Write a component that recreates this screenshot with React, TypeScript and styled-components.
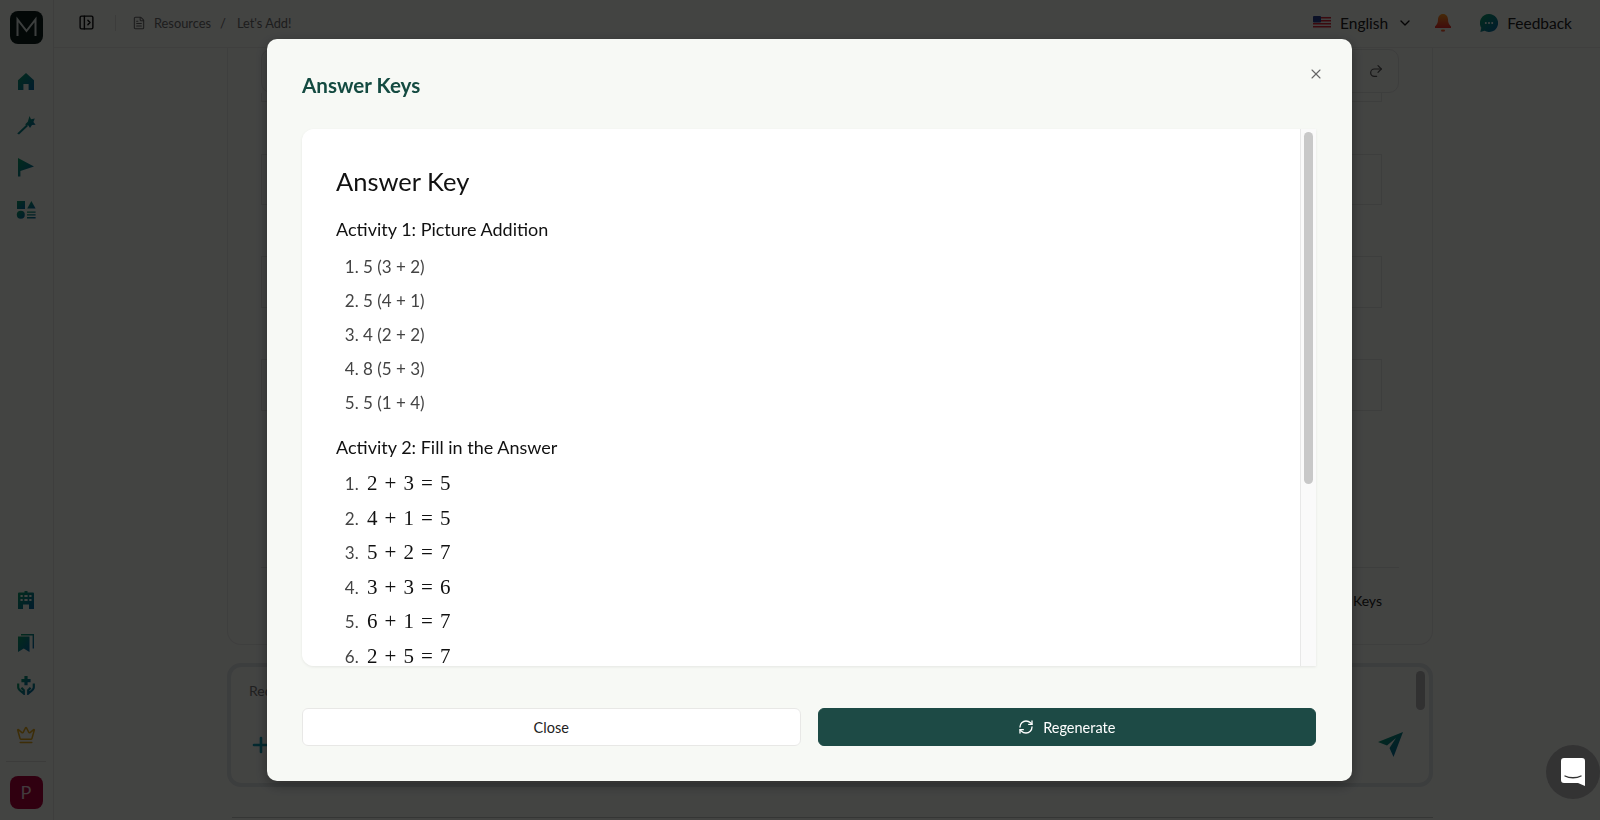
import { createGlobalStyle, styled } from "styled-components";
import { ChevronDown, Crown, FileText, PanelLeftOpen, Plus, RefreshCw, Redo2, X } from "lucide-react";

const GlobalStyle = createGlobalStyle`
  html, body {
    margin: 0;
    height: 820px;
    overflow: hidden;
    background: #f7f9f5;
    font-family: "Lato", "Liberation Sans", sans-serif;
  }
  * { box-sizing: border-box; }
`;

const firstAnswers = ["5 (3 + 2)", "5 (4 + 1)", "4 (2 + 2)", "8 (5 + 3)", "5 (1 + 4)"];
const secondAnswers = ["2 + 3 = 5", "4 + 1 = 5", "5 + 2 = 7", "3 + 3 = 6", "6 + 1 = 7", "2 + 5 = 7"];
const stubs = [
  { height: 9, gap: 52 },
  { height: 51, gap: 51 },
  { height: 52, gap: 51 },
  { height: 52, gap: 0 },
];

const Gradients = () => (
  <svg width="0" height="0" style={{ position: "absolute" }}>
    <defs>
      <linearGradient id="brand" x1="0" y1="0" x2="1" y2="1">
        <stop offset="0" stopColor="#0a9f66" />
        <stop offset="1" stopColor="#0666a8" />
      </linearGradient>
      <linearGradient id="alert" x1="0" y1="0" x2="0" y2="1">
        <stop offset="0" stopColor="#ff9a1f" />
        <stop offset="1" stopColor="#ee2b2b" />
      </linearGradient>
    </defs>
  </svg>
);

const LogoMark = () => (
  <svg width="33" height="33" viewBox="0 0 33 33" fill="none" stroke="#dfe8e5" strokeWidth="2">
    <path d="M7.500 25V8.500L16.500 20 25.500 8.500V25" />
  </svg>
);
const HomeIcon = () => (
  <svg width="20" height="20" viewBox="0 0 20 20" fill="url(#brand)">
    <path d="M10 1 18 8.200 18 18 12.600 18 12.600 12 7.400 12 7.400 18 2 18 2 8.200Z" />
  </svg>
);
const WandIcon = () => (
  <svg width="20" height="20" viewBox="0 0 20 20" fill="url(#brand)">
    <path d="M13.500 1 15 4.300 18.800 3.400 17.400 7 19.600 9.800 16 10 14 13 12.400 10.400 9 9.400 11.800 6.800Z" />
    <path d="M10.600 9.600 12 11 3 19.600 1.200 18.400Z" />
  </svg>
);
const FlagIcon = () => (
  <svg width="18" height="20" viewBox="0 0 18 20" fill="url(#brand)">
    <path d="M1 1 17 9.600 3.400 14 3.400 19.600 1 19.600Z" />
  </svg>
);
const ShapesIcon = () => (
  <svg width="20" height="20" viewBox="0 0 20 20" fill="url(#brand)">
    <rect x="1" y="1" width="8" height="8" />
    <path d="M15.400 1 19.600 8.600 11.200 8.600Z" />
    <circle cx="4.800" cy="14.800" r="4" />
    <path d="M11 11.400h8.600v1.400H11zM11 14.200h8.600v1.400H11zM11 17h8.600v1.400H11z" />
  </svg>
);
const BuildingIcon = () => (
  <svg width="16" height="18" viewBox="0 0 16 18" fill="url(#brand)">
    <path
      fillRule="evenodd"
      d="M6.500 0h3v1.500H15a1 1 0 0 1 1 1V18h-5v-4.500H5V18H0V2.500a1 1 0 0 1 1-1h5.500ZM2.500 4v2h2.200V4Zm3.900 0v2h3.200V4Zm4.900 0v2h2.200V4ZM2.500 8v2h2.200V8Zm3.900 0v2h3.200V8Zm4.900 0v2h2.200V8Z"
    />
  </svg>
);
const BookmarksIcon = () => (
  <svg width="16" height="18" viewBox="0 0 16 18" fill="url(#brand)">
    <path d="M0 2.500h11.500V18L5.750 14.400 0 18Z" />
    <path d="M3 0h13v14.500h-1.400V1.400H3Z" />
  </svg>
);
const CareIcon = () => (
  <svg width="20" height="20" viewBox="0 0 20 20">
    <path fill="url(#brand)" d="M8.400 1h3.200v3h3v3.200h-3v3H8.400v-3h-3V4h3Z" />
    <path
      fill="none"
      stroke="url(#brand)"
      strokeWidth="2.200"
      d="M2.200 8.500v3.800c0 2.400 2.200 3.700 5.600 6.200v-3.200l-2.400-2.600M17.800 8.500v3.800c0 2.400-2.200 3.700-5.600 6.200v-3.200l2.400-2.600"
    />
  </svg>
);
const SendIcon = () => (
  <svg width="25" height="25" viewBox="0 0 25 25" fill="url(#brand)">
    <path d="M25 0 0 10 9 13.500 18 6 11.500 16 15.500 25Z" />
  </svg>
);
const BellIcon = () => (
  <svg width="16" height="18" viewBox="0 0 16 18" fill="url(#alert)">
    <path d="M8 0c3.200 0 5 2.600 5 5.600 0 3.200 1 5.200 3 6.800v1.600H0v-1.600c2-1.600 3-3.600 3-6.800C3 2.600 4.800 0 8 0Z" />
    <rect x="6" y="15.400" width="4" height="2" rx="1" />
  </svg>
);
const BubbleIcon = () => (
  <svg width="18" height="18" viewBox="0 0 18 18">
    <path fill="url(#brand)" d="M9 0a9 9 0 1 1-4.400 16.800L.4 18l.9-4.300A9 9 0 0 1 9 0Z" />
    <circle cx="5.800" cy="9" r="1" fill="#fff" />
    <circle cx="9" cy="9" r="1" fill="#fff" />
    <circle cx="12.200" cy="9" r="1" fill="#fff" />
  </svg>
);
const UsFlag = () => (
  <svg width="18" height="13" viewBox="0 0 18 13">
    <rect width="18" height="13" rx="1" fill="#f0f0f0" />
    <path d="M0 1h18v1.400H0zM0 4h18v1.400H0zM0 7h18v1.400H0zM0 10h18v1.400H0z" fill="#d8283a" />
    <rect width="8" height="6.500" rx="1" fill="#2a3f8f" />
  </svg>
);
const ChatIcon = () => (
  <svg width="24" height="28" viewBox="0 0 24 28">
    <path d="M3 0h18a3 3 0 0 1 3 3v25l-7-3H3a3 3 0 0 1-3-3V3a3 3 0 0 1 3-3Z" fill="#fff" />
    <path d="M4 18c4.500 2.400 11.500 2.400 16 0" fill="none" stroke="#333" strokeWidth="1.400" strokeLinecap="round" />
  </svg>
);

export default function App() {
  return (
    <>
      <GlobalStyle />
      <Gradients />
      <Page>
        <Sidebar>
          <Logo><LogoMark /></Logo>
          <NavGroup>
            <NavItem><HomeIcon /></NavItem>
            <NavItem><WandIcon /></NavItem>
            <NavItem><FlagIcon /></NavItem>
            <NavItem><ShapesIcon /></NavItem>
          </NavGroup>
          <Spacer />
          <NavGroup>
            <NavItem><BuildingIcon /></NavItem>
            <NavItem><BookmarksIcon /></NavItem>
            <NavItem><CareIcon /></NavItem>
            <CrownItem><Crown size={20} color="#e0a81c" strokeWidth={1.8} /></CrownItem>
          </NavGroup>
          <SideDivider />
          <Avatar>P</Avatar>
        </Sidebar>
        <Main>
          <Header>
            <PanelLeftOpen size={17} color="#111" strokeWidth={2} />
            <HeaderDivider />
            <FileText size={14} color="#666" strokeWidth={1.8} />
            <Crumb>Resources</Crumb>
            <CrumbSlash>/</CrumbSlash>
            <Crumb>Let's Add!</Crumb>
            <Spacer />
            <UsFlag />
            <Language>English</Language>
            <ChevronDown size={16} color="#111" strokeWidth={2} />
            <BellSlot><BellIcon /></BellSlot>
            <BubbleIcon />
            <Language>Feedback</Language>
          </Header>
          <Content>
            <Card>
              <Toolbar>
                <RedoButton><Redo2 size={16} color="#555" strokeWidth={1.8} /></RedoButton>
              </Toolbar>
              <StubList>
                {stubs.map((stub, i) => (
                  <Stub key={i} $height={stub.height} $gap={stub.gap} />
                ))}
              </StubList>
              <Spacer />
              <CardFooter>
                <span>Answer Keys</span>
              </CardFooter>
            </Card>
            <Composer>
              <ComposerText>Request changes</ComposerText>
              <ComposerRow>
                <Plus size={24} color="#0f9ab0" strokeWidth={2.6} />
                <SendIcon />
              </ComposerRow>
              <ComposerThumb />
            </Composer>
            <NextEdge />
          </Content>
        </Main>
      </Page>
      <Overlay>
        <Modal>
          <ModalHeader>
            <ModalTitle>Answer Keys</ModalTitle>
            <CloseIcon><X size={16} color="#666" strokeWidth={1.6} /></CloseIcon>
          </ModalHeader>
          <Panel>
            <Doc>
              <DocTitle>Answer Key</DocTitle>
              <DocHeading>Activity 1: Picture Addition</DocHeading>
              <AnswerList>
                {firstAnswers.map((a) => (
                  <Answer key={a}>{a}</Answer>
                ))}
              </AnswerList>
              <DocHeading>Activity 2: Fill in the Answer</DocHeading>
              <MathList>
                {secondAnswers.map((a) => (
                  <MathAnswer key={a}><MathText>{a}</MathText></MathAnswer>
                ))}
              </MathList>
            </Doc>
            <ScrollRail>
              <ScrollThumb />
            </ScrollRail>
          </Panel>
          <ModalFooter>
            <FooterButton>Close</FooterButton>
            <FooterButton $primary>
              <RefreshCw size={16} strokeWidth={2} />
              Regenerate
            </FooterButton>
          </ModalFooter>
        </Modal>
      </Overlay>
      <ChatBubble><ChatIcon /></ChatBubble>
    </>
  );
}

const Page = styled.div`
  display: grid;
  grid-template-columns: 54px 1fr;
  height: 820px;
`;

const Sidebar = styled.aside`
  display: flex;
  flex-direction: column;
  align-items: center;
  padding: 11px 1px 11px 0;
  border-right: 1px solid #e4e6e2;
`;

const Logo = styled.div`
  display: flex;
  width: 33px;
  height: 33px;
  border-radius: 8px;
  background: #0c1f1b;
  margin-bottom: 17px;
`;

const NavGroup = styled.nav`
  display: flex;
  flex-direction: column;
`;

const NavItem = styled.div`
  display: flex;
  align-items: center;
  justify-content: center;
  height: 42.5px;
`;

const CrownItem = styled(NavItem)`
  margin-top: 7px;
`;

const Spacer = styled.div`
  flex: 1;
`;

const SideDivider = styled.div`
  width: 40px;
  height: 1px;
  background: #dcdedb;
  margin: 5px 0 14px;
`;

const Avatar = styled.div`
  width: 33px;
  height: 33px;
  border-radius: 8px;
  background: #b3003c;
  color: #f4d9e2;
  font-size: 18px;
  line-height: 33px;
  text-align: center;
`;

const Main = styled.main`
  display: flex;
  flex-direction: column;
  min-width: 0;
`;

const Header = styled.header`
  display: flex;
  align-items: center;
  height: 48px;
  padding: 0 19px 2px 24px;
  border-bottom: 1px solid #e8eae6;
`;

const HeaderDivider = styled.div`
  width: 1px;
  height: 16px;
  background: #dcdedb;
  margin: 0 16px 0 20px;
`;

const Crumb = styled.span`
  margin-left: 8px;
  font-size: 12.8px;
  color: #6d6d6d;
`;

const CrumbSlash = styled.span`
  margin: 0 3px 0 9px;
  font-size: 13px;
  color: #6d6d6d;
`;

const Language = styled.span`
  margin: 0 9px;
  font-size: 15.5px;
  color: #222;
`;

const BellSlot = styled.div`
  display: flex;
  margin: 0 29px 0 22px;
`;

const Content = styled.div`
  display: flex;
  flex-direction: column;
  gap: 18px;
  height: 772px;
  padding: 0 167px 0 173px;
`;

const Card = styled.section`
  display: flex;
  flex-direction: column;
  flex: 1;
  padding: 1px 33px 0 33px;
  border: 1px solid #e6e8e4;
  border-top: 0;
  border-radius: 0 0 14px 14px;
`;

const Toolbar = styled.div`
  display: flex;
  justify-content: flex-end;
  height: 44px;
  border: 1px solid #e2e4e0;
  border-radius: 10px;
`;

const RedoButton = styled.div`
  display: flex;
  align-items: center;
  justify-content: center;
  width: 44px;
`;

const StubList = styled.div`
  display: flex;
  flex-direction: column;
  padding-right: 17px;
`;

const Stub = styled.div<{ $height: number; $gap: number }>`
  height: ${({ $height }) => $height}px;
  margin-bottom: ${({ $gap }) => $gap}px;
  border: 1px solid #e2e4e0;
  border-top-width: ${({ $height }) => ($height < 20 ? 0 : 1)}px;
`;

const CardFooter = styled.div`
  display: flex;
  justify-content: flex-end;
  align-items: center;
  height: 77px;
  padding: 0 17px 12px 0;
  border-top: 1px solid #e2e4e0;
  font-size: 14px;
  color: #222;
`;

const Composer = styled.section`
  position: relative;
  display: flex;
  flex-direction: column;
  justify-content: space-between;
  flex-shrink: 0;
  height: 124px;
  padding: 15px 26px 26px 18px;
  border: 4px solid #dde3e3;
  border-radius: 14px;
`;

const ComposerText = styled.div`
  font-size: 14px;
  color: #777;
`;

const ComposerRow = styled.div`
  display: flex;
  justify-content: space-between;
  align-items: center;
`;

const ComposerThumb = styled.div`
  position: absolute;
  top: 4px;
  right: 4px;
  width: 9px;
  height: 39px;
  border-radius: 5px;
  background: #b4b4b4;
`;

const NextEdge = styled.div`
  flex-shrink: 0;
  height: 3px;
  margin: 12px 0 0 5px;
  border-top: 1px solid #c4c6c2;
`;

const Overlay = styled.div`
  position: fixed;
  inset: 0;
  display: flex;
  align-items: center;
  justify-content: center;
  padding-left: 19px;
  background: rgba(0, 0, 0, 0.73);
`;

const Modal = styled.div`
  display: flex;
  flex-direction: column;
  width: 1085px;
  height: 742px;
  padding: 0 36px 35px 35px;
  border-radius: 10px;
  background: #f7f9f5;
  box-shadow: 0 4px 14px rgba(0, 0, 0, 0.35);
`;

const ModalHeader = styled.div`
  display: flex;
  align-items: flex-start;
  justify-content: space-between;
  height: 90px;
  flex-shrink: 0;
`;

const ModalTitle = styled.h2`
  margin: 31px 0 0;
  font-size: 20.6px;
  line-height: 30px;
  font-weight: 700;
  color: #144b41;
`;

const CloseIcon = styled.div`
  display: flex;
  margin: 27px -8px 0 0;
`;

const Panel = styled.div`
  display: flex;
  flex: 1;
  min-height: 0;
  box-shadow: 0 1px 3px rgba(0, 0, 0, 0.08);
  border-radius: 12px 0 0 12px;
`;

const Doc = styled.article`
  flex: 1;
  overflow: hidden;
  padding: 36px 34px 0;
  border-radius: 12px 0 0 12px;
  background: #fff;
  color: #111;
`;

const DocTitle = styled.h1`
  margin: 0 0 16px;
  font-size: 25.5px;
  line-height: 32px;
  font-weight: 400;
`;

const DocHeading = styled.h3`
  margin: 0;
  font-size: 18px;
  line-height: 32px;
  font-weight: 400;
`;

const AnswerList = styled.ol`
  margin: 5px 0 11px;
  padding-left: 27px;
`;

const MathList = styled(AnswerList)`
  margin-top: 3px;
`;

const Answer = styled.li`
  height: 34px;
  font-size: 17px;
  line-height: 34px;
  color: #444;
`;

const MathAnswer = styled(Answer)`
  height: 34.5px;
`;

const MathText = styled.span`
  margin-left: 4px;
  font-family: "Liberation Serif", "DejaVu Serif", serif;
  font-size: 21px;
  word-spacing: 1.8px;
  color: #111;
`;

const ScrollRail = styled.div`
  flex-shrink: 0;
  width: 16px;
  padding: 3px 3px 0 3px;
  background: #fafafa;
  border-left: 1px solid #e8e8e8;
`;

const ScrollThumb = styled.div`
  height: 352px;
  border-radius: 5px;
  background: #c8c8c8;
`;

const ModalFooter = styled.div`
  display: flex;
  gap: 17px;
  margin-top: 42px;
  flex-shrink: 0;
`;

const FooterButton = styled.button<{ $primary?: boolean }>`
  flex: 1;
  display: flex;
  align-items: center;
  justify-content: center;
  gap: 9px;
  height: 38px;
  border-radius: 6px;
  border: 1px solid ${({ $primary }) => ($primary ? "#1d4a45" : "#e8e8e6")};
  background: ${({ $primary }) => ($primary ? "#1d4a45" : "#fff")};
  color: ${({ $primary }) => ($primary ? "#fff" : "#222")};
  font-family: inherit;
  font-size: 14.5px;
`;

const ChatBubble = styled.div`
  position: fixed;
  left: 1546px;
  top: 745px;
  display: flex;
  align-items: center;
  justify-content: center;
  width: 54px;
  height: 54px;
  border-radius: 50%;
  background: #333;
`;
